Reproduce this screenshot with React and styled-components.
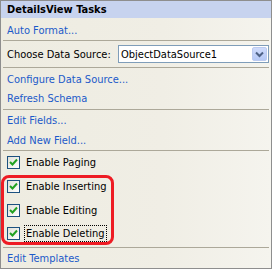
import React from 'react'
import styled, { createGlobalStyle } from 'styled-components'

const Global = createGlobalStyle`
  html, body {
    margin: 0;
    padding: 0;
    background: #ffffff;
  }
  body {
    font-family: 'DejaVu Sans Condensed', 'DejaVu Sans', Tahoma, sans-serif;
    font-stretch: condensed;
    font-size: 11px;
    white-space: nowrap;
  }
`

const Panel = styled.div`
  position: relative;
  box-sizing: border-box;
  width: 272px;
  height: 269px;
  border: 1px solid #8e8e8e;
  background: linear-gradient(to right, #eeece1 0%, #f0eee5 60%, #f5f4ee 100%);
  display: flex;
  flex-direction: column;
`

const Header = styled.div`
  height: 17px;
  display: flex;
  align-items: center;
  padding-left: 6px;
  background: #c7d3ef;
  font-weight: bold;
  color: #000;
`

const Section = styled.div`
  display: flex;
  flex-direction: column;
  padding: ${({ pad }) => pad || '0'};
`

const Separator = styled.div`
  height: 1px;
  margin: 0 2px;
  background: #aca899;
`

const LinkRow = styled.div`
  height: ${({ h }) => h || 19}px;
  display: flex;
  align-items: center;
  padding-left: 6px;
  color: #1c5ac9;
`

const FieldRow = styled.div`
  height: 20px;
  display: flex;
  align-items: center;
  padding-left: 6px;
  padding-right: 2px;
  justify-content: space-between;
  color: #000;
`

const Select = styled.div`
  box-sizing: border-box;
  width: 151px;
  height: 18px;
  border: 1px solid #7f9db9;
  background: #fff;
  display: flex;
  align-items: center;
  padding-left: 2px;
  padding-right: 1px;
  justify-content: space-between;
`

const DropButton = styled.div`
  width: 15px;
  height: 14px;
  border-radius: 2px;
  background: linear-gradient(#cfdbfb, #b5c8f6);
  border: 1px solid #bccbf0;
  box-sizing: border-box;
  display: flex;
  align-items: center;
  justify-content: center;
`

const CheckRow = styled.div`
  height: ${({ h }) => h || 24}px;
  display: flex;
  align-items: center;
  padding-left: 6px;
  color: #000;
`

const Box = styled.span`
  box-sizing: border-box;
  width: 13px;
  height: 13px;
  border: 1px solid #1c5180;
  background: linear-gradient(135deg, #e0e0d8, #ffffff);
  display: inline-flex;
  align-items: center;
  justify-content: center;
  margin-right: 4px;
`

const Label = styled.span`
  padding: 1px 1px;
  border: 1px dotted ${({ focused }) => (focused ? '#000' : 'transparent')};
`

const Highlight = styled.div`
  position: absolute;
  left: 0px;
  top: 174px;
  width: 113px;
  height: 70px;
  box-sizing: border-box;
  border: 3px solid #ee1c24;
  border-radius: 8px;
  pointer-events: none;
`

const Check = () => (
  <svg width='9' height='9' viewBox='0 0 9 9'>
    <path d='M1 4 L3.5 6.5 L8 1.5' fill='none' stroke='#21a121' strokeWidth='2' />
  </svg>
)

const Chevron = () => (
  <svg width='9' height='7' viewBox='0 0 9 7'>
    <path d='M1 1.5 L4.5 5 L8 1.5' fill='none' stroke='#4d6185' strokeWidth='2' />
  </svg>
)

const CheckItem = ({ label, focused, h }) => (
  <CheckRow h={h}>
    <Box>
      <Check />
    </Box>
    <Label focused={focused}>{label}</Label>
  </CheckRow>
)

const App = () => (
  <>
    <Global />
    <Panel>
      <Header>DetailsView Tasks</Header>
      <Section pad='3px 0 0'>
        <LinkRow>Auto Format...</LinkRow>
      </Section>
      <Separator />
      <Section pad='3px 0 3px'>
        <FieldRow>
          <span>Choose Data Source:</span>
          <Select>
            <span>ObjectDataSource1</span>
            <DropButton>
              <Chevron />
            </DropButton>
          </Select>
        </FieldRow>
      </Section>
      <Separator />
      <Section pad='2px 0 1px'>
        <LinkRow>Configure Data Source...</LinkRow>
        <LinkRow>Refresh Schema</LinkRow>
      </Section>
      <Separator />
      <Section>
        <LinkRow h={20}>Edit Fields...</LinkRow>
        <LinkRow h={20}>Add New Field...</LinkRow>
      </Section>
      <Separator />
      <Section pad='0 0 2px'>
        <CheckItem label='Enable Paging' h={23} />
        <CheckItem label='Enable Inserting' />
        <CheckItem label='Enable Editing' />
        <CheckItem label='Enable Deleting' h={23} focused />
      </Section>
      <Separator />
      <Section>
        <LinkRow h={20}>Edit Templates</LinkRow>
      </Section>
      <Highlight />
    </Panel>
  </>
)

export default App
